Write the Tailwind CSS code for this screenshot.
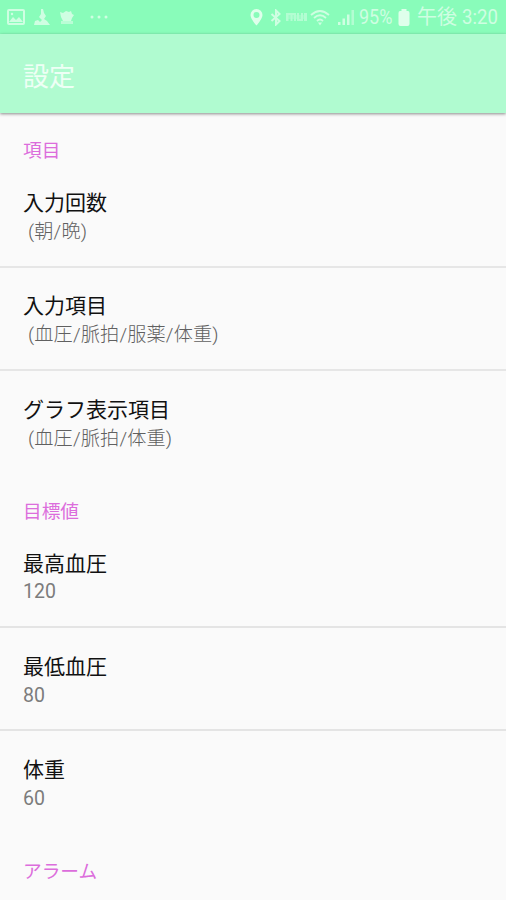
<!DOCTYPE html>
<html lang="ja">
<head>
<meta charset="utf-8">
<title>設定</title>
<script src="https://cdn.jsdelivr.net/npm/@tailwindcss/browser@4"></script>
</head>
<body class="w-[506px] h-[900px] overflow-hidden bg-[#fafafa] font-[Roboto,'Noto_Sans_CJK_JP',sans-serif]">
<div class="flex h-[900px] flex-col overflow-hidden">
  <div class="flex h-[34px] shrink-0 items-center bg-[#89fcba] pl-[7px] pr-[8px] text-[#cffee2]">
    <svg class="h-[18px] w-[18px]" viewBox="0 0 18 18" fill="none" stroke="currentColor" stroke-width="2"><rect x="1" y="2" width="16" height="14" rx="1"/><path d="M2 14l4-5 3 3 3-3 4 5z" fill="currentColor" stroke="none"/><circle cx="5" cy="6" r="1.2" fill="currentColor" stroke="none"/></svg>
    <svg class="ml-[8px] h-[18px] w-[18px]" viewBox="0 0 18 18" fill="currentColor"><path d="M8 1h2l1 4 2 3-2 3 3 2 3 4H1l1-4 3-1 2 2 2-2-3-3 2-3z"/></svg>
    <svg class="ml-[7px] h-[18px] w-[18px]" viewBox="0 0 18 18" fill="currentColor"><path d="M2 4l3 1 3-2 3 1 2-1 1 3 2 1-2 3-1 3H5L3 9z"/><path d="M3 13h12v3H3z" opacity=".7"/></svg>
    <svg class="ml-[14px] h-[6px] w-[20px]" viewBox="0 0 20 6" fill="currentColor"><circle cx="2" cy="3" r="1.500"/><circle cx="9" cy="3" r="1.500"/><circle cx="16" cy="3" r="1.500"/></svg>
    <div class="ml-auto flex items-center">
      <svg class="h-[17px] w-[13px] text-[#dfffeb]" viewBox="0 0 13 17"><path d="M6.500 0A6 6 0 0 0 .5 6c0 4 6 10.500 6 10.500s6-6.500 6-10.500a6 6 0 0 0-6-6zm0 3a3 3 0 1 1 0 6 3 3 0 0 1 0-6z" fill="currentColor" fill-rule="evenodd"/></svg>
      <svg class="ml-[7px] h-[17px] w-[12px]" viewBox="0 0 12 17" fill="none" stroke="currentColor" stroke-width="2"><path d="M1.500 5l8 7L6 15.500v-14L9.500 5l-8 7"/></svg>
      <svg class="ml-[4px] h-[10px] w-[22px] opacity-60" viewBox="0 0 22 10" fill="currentColor"><path d="M0 1h10v8H8V3H6.500v6h-2V3H2.500v6H0zM11 1h2v6h2V1h2v8h-6zM18 1h3v8h-3z"/><path d="M2 3h18v4H2z" opacity=".5"/></svg>
      <svg class="ml-[2px] h-[17px] w-[20px]" viewBox="0 0 20 16" fill="none" stroke="currentColor" stroke-width="1.800"><path d="M1 5.500q9-8 18 0M4 8.500q6-5.500 12 0M7 11.500q3-3 6 0"/><path d="M8 13h4l-2 3z" fill="currentColor" stroke="none"/></svg>
      <svg class="ml-[8px] h-[17px] w-[17px]" viewBox="0 0 17 17" fill="currentColor"><path d="M0 13h2.500v3H0zM4.500 9.500H7V16H4.500zM9 5.500h2.500V16H9z"/><path d="M13.500 1H16v15h-2.500z" opacity=".6"/></svg>
      <span class="ml-[4px] w-[36px] whitespace-nowrap text-[20px] leading-[34px]"><span class="inline-block origin-left scale-x-[0.9]">95%</span></span>
      <svg class="ml-[3px] h-[17px] w-[12px] text-[#dfffeb]" viewBox="0 0 11 17" fill="currentColor"><path d="M3 0h5v2h1.500Q11 2 11 4v11q0 2-2 2H2q-2 0-2-2V4q0-2 1.500-2H3z"/></svg>
      <span class="ml-[7px] whitespace-nowrap text-[20px] leading-[34px]">午後</span>
      <span class="ml-[5px] w-[36px] whitespace-nowrap text-[20px] leading-[34px]"><span class="inline-block origin-left scale-x-[0.93]">3:20</span></span>
    </div>
  </div>
  <header class="relative flex h-[79px] shrink-0 items-center bg-[#b0fbd0] pt-[6px] pl-[23px] shadow-[0_1px_3px_rgba(0,0,0,0.45)]">
    <h1 class="text-[26px] leading-[30px] text-[#eefff5]">設定</h1>
  </header>
  <main class="text-[21px] text-[#111]">
    <h2 class="h-[51px] pt-[24px] pl-[23px] text-[18.7px] leading-[28px] text-[#dc6ddc]">項目</h2>
    <section class="divide-y-2 divide-[#e6e6e6]">
      <div class="h-[104px] pt-[24px] pl-[23px]"><p class="leading-[30px]">入力回数</p><p class="pl-[5px] text-[19.200px] leading-[28px] font-light tracking-[0.15px] text-[#606060]">(朝/晩)</p></div>
      <div class="h-[103px] pt-[23px] pl-[23px]"><p class="leading-[30px]">入力項目</p><p class="pl-[5px] text-[19.200px] leading-[28px] font-light tracking-[0.15px] text-[#606060]">(血圧/脈拍/服薬/体重)</p></div>
      <div class="h-[103px] pt-[24px] pl-[23px]"><p class="leading-[30px]">グラフ表示項目</p><p class="pl-[5px] text-[19.200px] leading-[28px] font-light tracking-[0.15px] text-[#606060]">(血圧/脈拍/体重)</p></div>
    </section>
    <h2 class="h-[50px] pt-[24px] pl-[23px] text-[18.7px] leading-[28px] text-[#dc6ddc]">目標値</h2>
    <section class="divide-y-2 divide-[#e4e4e4]">
      <div class="h-[104px] pt-[25px] pl-[23px]"><p class="leading-[30px]">最高血圧</p><p class="text-[19.500px] leading-[26px] text-[#7c7c7c]">120</p></div>
      <div class="h-[103px] pt-[24px] pl-[23px]"><p class="leading-[30px]">最低血圧</p><p class="text-[19.500px] leading-[27px] text-[#7c7c7c]">80</p></div>
      <div class="h-[103px] pt-[24px] pl-[23px]"><p class="leading-[30px]">体重</p><p class="text-[19.500px] leading-[27px] text-[#7c7c7c]">60</p></div>
    </section>
    <h2 class="h-[51px] pt-[24px] pl-[23px] text-[18.7px] leading-[28px] text-[#dc6ddc]">アラーム</h2>
  </main>
</div>
</body>
</html>
